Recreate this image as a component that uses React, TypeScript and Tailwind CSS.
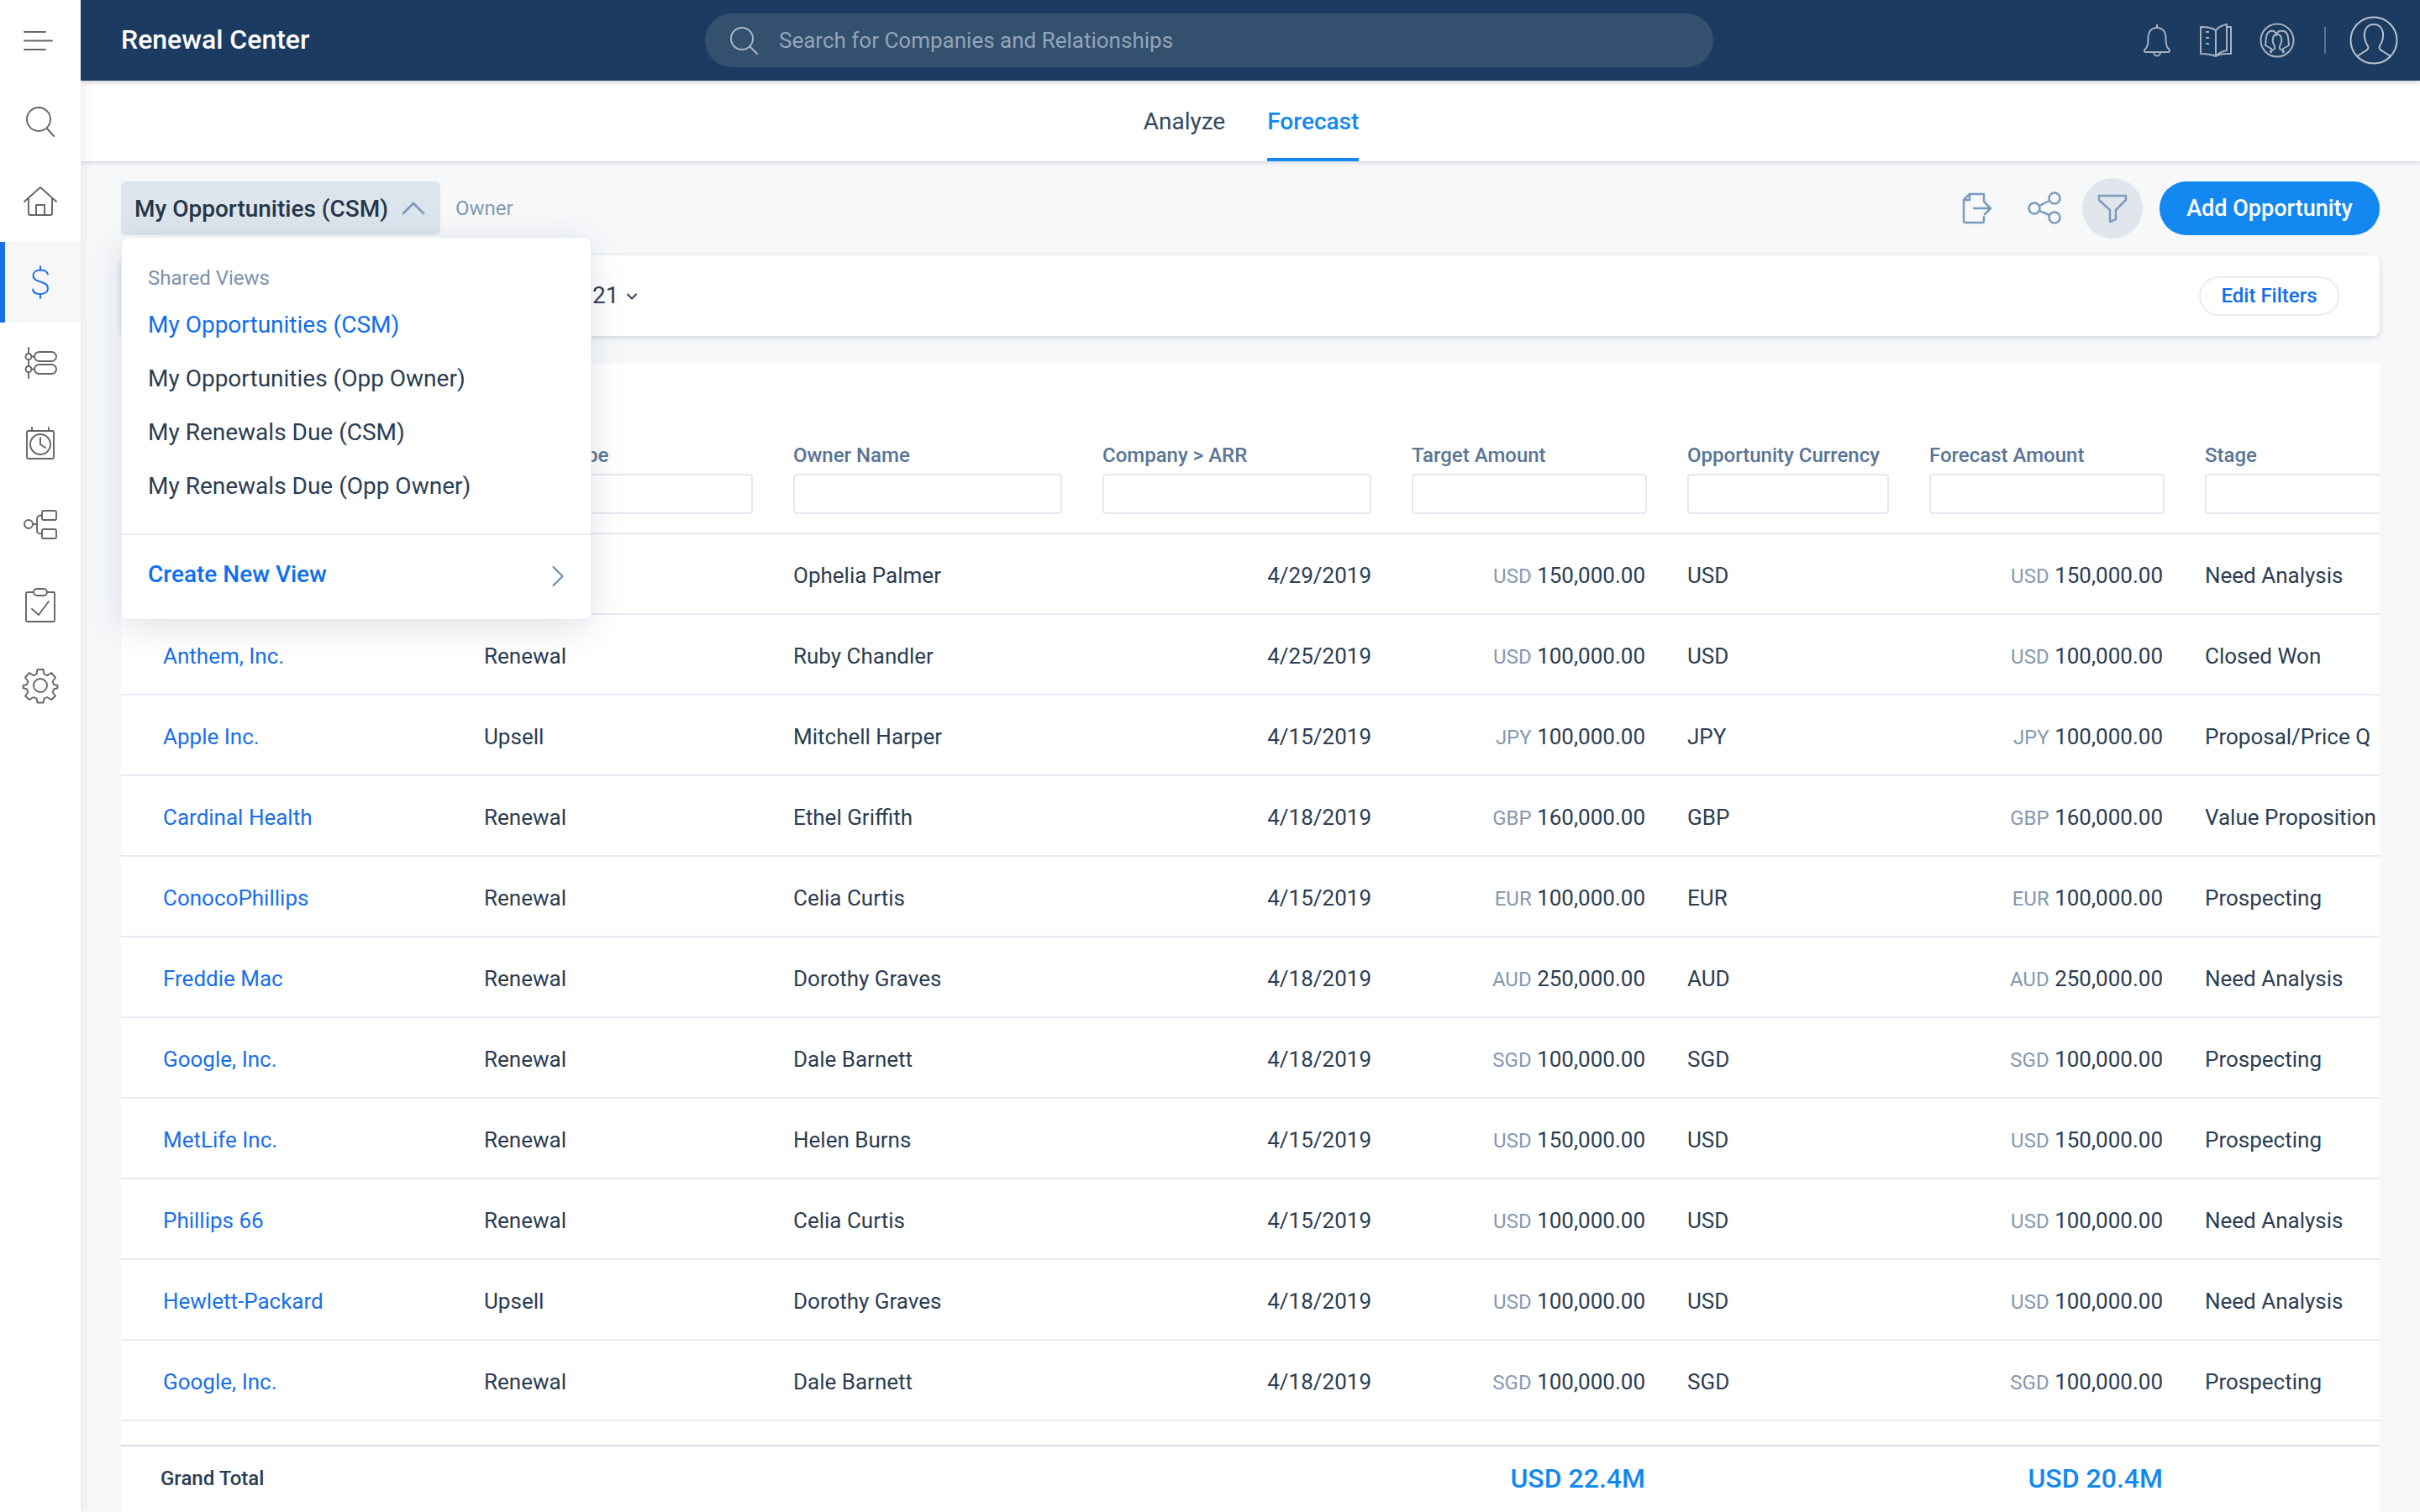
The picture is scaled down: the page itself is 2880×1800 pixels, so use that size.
import { ChevronDown, ChevronRight, ChevronUp } from "lucide-react";

type Row = {
  company: string;
  type: string;
  owner: string;
  date: string;
  cur: string;
  target: string;
  forecast: string;
  stage: string;
};

const rows: Row[] = [
  { company: "", type: "", owner: "Ophelia Palmer", date: "4/29/2019", cur: "USD", target: "150,000.00", forecast: "150,000.00", stage: "Need Analysis" },
  { company: "Anthem, Inc.", type: "Renewal", owner: "Ruby Chandler", date: "4/25/2019", cur: "USD", target: "100,000.00", forecast: "100,000.00", stage: "Closed Won" },
  { company: "Apple Inc.", type: "Upsell", owner: "Mitchell Harper", date: "4/15/2019", cur: "JPY", target: "100,000.00", forecast: "100,000.00", stage: "Proposal/Price Q" },
  { company: "Cardinal Health", type: "Renewal", owner: "Ethel Griffith", date: "4/18/2019", cur: "GBP", target: "160,000.00", forecast: "160,000.00", stage: "Value Proposition" },
  { company: "ConocoPhillips", type: "Renewal", owner: "Celia Curtis", date: "4/15/2019", cur: "EUR", target: "100,000.00", forecast: "100,000.00", stage: "Prospecting" },
  { company: "Freddie Mac", type: "Renewal", owner: "Dorothy Graves", date: "4/18/2019", cur: "AUD", target: "250,000.00", forecast: "250,000.00", stage: "Need Analysis" },
  { company: "Google, Inc.", type: "Renewal", owner: "Dale Barnett", date: "4/18/2019", cur: "SGD", target: "100,000.00", forecast: "100,000.00", stage: "Prospecting" },
  { company: "MetLife Inc.", type: "Renewal", owner: "Helen Burns", date: "4/15/2019", cur: "USD", target: "150,000.00", forecast: "150,000.00", stage: "Prospecting" },
  { company: "Phillips 66", type: "Renewal", owner: "Celia Curtis", date: "4/15/2019", cur: "USD", target: "100,000.00", forecast: "100,000.00", stage: "Need Analysis" },
  { company: "Hewlett-Packard", type: "Upsell", owner: "Dorothy Graves", date: "4/18/2019", cur: "USD", target: "100,000.00", forecast: "100,000.00", stage: "Need Analysis" },
  { company: "Google, Inc.", type: "Renewal", owner: "Dale Barnett", date: "4/18/2019", cur: "SGD", target: "100,000.00", forecast: "100,000.00", stage: "Prospecting" },
];

const columns = ["Company Name", "Renewal Type", "Owner Name", "Company > ARR", "Target Amount", "Opportunity Currency", "Forecast Amount", "Stage"];

const grid = "grid grid-cols-[384px_320px_320px_320px_280px_240px_280px_280px] gap-x-[48px]";

function Icon({ children, size = 44, color = "#666" }: { children: React.ReactNode; size?: number; color?: string }) {
  return (
    <svg width={size} height={size} viewBox="0 0 44 44" fill="none" stroke={color} strokeWidth="1.9" strokeLinecap="round" strokeLinejoin="round">
      {children}
    </svg>
  );
}

function Sidebar() {
  const item = "h-[96px] flex items-center justify-center";
  return (
    <div className="w-[96px] shrink-0 bg-white flex flex-col z-20 shadow-[4px_0_10px_rgba(60,80,110,0.08)]">
      <div className={item}>
        <Icon>
          <path d="M3 12H28M3 22.5H36M3 33H28" />
        </Icon>
      </div>
      <div className={item}>
        <Icon>
          <circle cx="20" cy="20" r="14" />
          <path d="M30 31L38 40" />
        </Icon>
      </div>
      <div className={item}>
        <Icon>
          <path d="M3 22L22 5L41 22M8 18V36.5a1.5 1.5 0 0 0 1.5 1.5H34.5a1.5 1.5 0 0 0 1.5-1.5V18" />
          <path d="M17 38V26H27V38" />
        </Icon>
      </div>
      <div className={`${item} relative bg-[#f7f7f7]`}>
        <div className="absolute left-0 top-0 bottom-0 w-[6px] bg-[#1a6fe8]" />
        <Icon color="#1a6fe8">
          <path d="M31 12.5C30 9 26.5 7.5 22 7.5C17 7.5 13.5 10 13.5 14C13.5 23.5 31 19.5 31 29.5C31 33.5 27 36 22 36C17 36 13.5 34 13 30.5" />
          <path d="M22 3V7.5M22 36V41" />
        </Icon>
      </div>
      <div className={item}>
        <Icon>
          <rect x="15" y="9" width="26" height="11" rx="5.5" />
          <rect x="15" y="24" width="26" height="11" rx="5.5" />
          <circle cx="8" cy="14.5" r="3.5" />
          <circle cx="8" cy="29.5" r="3.5" />
          <path d="M8 4V11M8 18V26M8 33V40M11.5 14.5H15M11.5 29.5H15" />
        </Icon>
      </div>
      <div className={item}>
        <Icon>
          <rect x="6" y="7" width="32" height="33" rx="1.5" />
          <circle cx="22" cy="23" r="12" />
          <path d="M22 15V23L28 27M12 3V7M32 3V7" />
        </Icon>
      </div>
      <div className={item}>
        <Icon>
          <circle cx="8" cy="22" r="5" />
          <rect x="24" y="6" width="17" height="11" rx="2" />
          <rect x="24" y="28" width="17" height="11" rx="2" />
          <path d="M13 22H18M18 15V30C18 32 20 33.5 24 33.5M18 15C18 13 20 11.5 24 11.5" />
        </Icon>
      </div>
      <div className={item}>
        <Icon>
          <rect x="5" y="7" width="34" height="35" rx="1.5" />
          <rect x="14" y="3" width="16" height="8" rx="4" fill="#fff" />
          <path d="M12 27L20 34L32 18" />
        </Icon>
      </div>
      <div className={item}>
        <Icon>
          <circle cx="22" cy="22" r="8" />
          <path d="M18.5 3H25.5L26.5 8.5L30 10.2L35 7L40 12.5L36.6 17.2L38 21L42.5 22L42.5 25L38 26.5L36.6 30L40 34.5L35 39L30 36L26.5 37.6L25.5 42.5H18.5L17.5 37.6L14 36L9 39L4 34.5L7.4 30L6 26.5L1.5 25L1.5 22L6 21L7.4 17.2L4 12.5L9 7L14 10.2L17.5 8.5Z" />
        </Icon>
      </div>
    </div>
  );
}

function Header() {
  return (
    <div className="h-[96px] shrink-0 bg-[#1c3b60] flex items-center pl-[48px] pr-[26px] z-10 shadow-[0_2px_6px_rgba(0,0,0,0.2)]">
      <div className="w-[695px] text-[32px] font-medium text-white pb-[2px]">Renewal Center</div>
      <div className="w-[1200px] h-[64px] rounded-full bg-[#33506f] flex items-center pl-[28px]">
        <svg width="36" height="36" viewBox="0 0 36 36" fill="none" stroke="#a9b6c6" strokeWidth="2" strokeLinecap="round">
          <circle cx="16" cy="16" r="13" />
          <path d="M26 26L34 34" />
        </svg>
        <span className="ml-[24px] text-[26px] text-[#93a4b8]">Search for Companies and Relationships</span>
      </div>
      <div className="ml-auto flex items-center">
        <svg width="36" height="44" viewBox="0 0 36 44" fill="none" stroke="#a6b2c0" strokeWidth="2" strokeLinejoin="round">
          <path d="M18 7C11 7 7.5 12.5 7.5 18C7.5 26 7 30 3.5 33C2.5 34 3 36 4.5 36H31.5C33 36 33.5 34 32.5 33C29 30 28.5 26 28.5 18C28.5 12.5 25 7 18 7Z" />
          <path d="M18 7V3M14 36C14 42 22 42 22 36" />
        </svg>
        <svg className="ml-[32px]" width="40" height="42" viewBox="0 0 40 42" fill="none" stroke="#a6b2c0" strokeWidth="2" strokeLinejoin="round">
          <path d="M20 9C14 5 8 5 2 5V37C8 37 14 37 20 40C25 36 31 37 38 37V5H33" />
          <path d="M20 9V40C24 35 28 34 33 33V2C28 3 23 5 20 9Z" />
          <path d="M8 11H12M8 18H12M8 25H12" />
        </svg>
        <svg className="ml-[32px]" width="42" height="42" viewBox="0 0 42 42" fill="none" stroke="#a6b2c0" strokeWidth="2">
          <circle cx="21" cy="21" r="19.5" />
          <path d="M14 36V31L7 27C8 20 7 12 13 10C17 9 19 11 20 14C21 11 24 9 29 10C35 12 34 20 35 27L28 31V36" />
          <path d="M21 14C26 14 27 19 26 24L24 28V31L30 35M21 14C16 14 15 19 16 24L18 28V31L12 35" />
        </svg>
        <div className="ml-[35px] w-[2px] h-[32px] bg-[#5b7390]" />
        <svg className="ml-[28px]" width="58" height="58" viewBox="0 0 58 58" fill="none" stroke="#b9c3cf" strokeWidth="2">
          <circle cx="29" cy="29" r="27.5" />
          <path d="M9 48L20 41C22 40 23 38 22 36C19 31 17 27 18 20C19 14 23 10 29 10C35 10 39 14 40 20C41 27 39 31 36 36C35 38 36 40 38 41L49 48" />
        </svg>
      </div>
    </div>
  );
}

function Tabs() {
  return (
    <div className="h-[96px] shrink-0 bg-white flex justify-center pl-[2px] gap-[50px] shadow-[0_2px_4px_rgba(60,80,110,0.18)] z-[5]">
      <div className="h-full flex items-center pt-[2px] text-[28px] font-normal text-[#34475c]">Analyze</div>
      <div className="h-full flex items-center text-[28px] font-medium text-[#1388f0] border-b-[4px] border-[#1388f0] pt-[6px]">Forecast</div>
    </div>
  );
}

function Toolbar() {
  return (
    <div className="mt-[24px] h-[64px] flex items-center">
      <div className="w-[380px] h-[64px] rounded-[6px] bg-[#dce4ec] flex items-center pl-[16px] gap-[6px]">
        <span className="text-[28px] font-medium text-[#26374a] whitespace-nowrap pt-[1px]">My Opportunities (CSM)</span>
        <ChevronUp size={48} strokeWidth={1.4} color="#7f9ab8" />
      </div>
      <span className="ml-[18px] text-[24px] text-[#8199b3]">Owner</span>
      <div className="ml-auto flex items-center">
        <svg width="40" height="40" viewBox="0 0 40 40" fill="none" stroke="#7c9bbd" strokeWidth="2.5" strokeLinejoin="round" strokeLinecap="round">
          <path d="M28 12V3H11L4 10V35C4 36.5 5 37 6 37H26C27.5 37 28 36.5 28 35V30" />
          <path d="M11 3V10H4M16 20H36M29 13L36 20L29 27" />
        </svg>
        <svg className="ml-[40px]" width="42" height="40" viewBox="0 0 42 40" fill="none" stroke="#7c9bbd" strokeWidth="2.5">
          <circle cx="8" cy="20" r="6.5" />
          <circle cx="32" cy="8" r="6.5" />
          <circle cx="32" cy="31" r="6.5" />
          <path d="M14 17L26 11M14 23L26 28" />
        </svg>
        <div className="ml-[23px] w-[72px] h-[72px] rounded-full bg-[#e1e6ed] flex items-center justify-center">
          <svg width="36" height="36" viewBox="0 0 36 36" fill="none" stroke="#7c9bbd" strokeWidth="2.5" strokeLinejoin="round">
            <path d="M2 3H34V8L22 20V31L15 34V20L2 8Z" />
          </svg>
        </div>
        <button className="ml-[20px] w-[262px] h-[64px] rounded-full bg-[#1388f0] text-white text-[27px] font-medium">Add Opportunity</button>
      </div>
    </div>
  );
}

function Amount({ cur, value }: { cur: string; value: string }) {
  return (
    <div className="text-right text-[#2b3d51] pr-[2px]">
      <span className="text-[#8599ae] text-[24px]">{cur}</span> {value}
    </div>
  );
}

function Table() {
  return (
    <div className="mt-[32px] flex-1 bg-white overflow-hidden">
      <div className={`${grid} h-[204px] pb-[22px] items-end border-b-[2px] border-[#e6ebf4]`}>
        {columns.map((c, i) => (
          <div key={c} className={i === 0 ? "" : "flex flex-col gap-[6px]"}>
            {i > 0 && (
              <>
                <div className="text-[24px] font-medium text-[#5a7595] whitespace-nowrap leading-[32px]">{c}</div>
                <div className="h-[48px] rounded-[4px] border-[2px] border-[#e3e8f1] bg-white" />
              </>
            )}
          </div>
        ))}
      </div>
      {rows.map((r, i) => (
        <div key={i} className={`${grid} h-[96px] pt-[4px] items-center border-b-[2px] border-[#e6ebf4] text-[26px] text-[#2b3d51]`}>
          <div className="pl-[50px] text-[#1a6fe8]">{r.company}</div>
          <div>{r.type}</div>
          <div>{r.owner}</div>
          <div className="text-right">{r.date}</div>
          <Amount cur={r.cur} value={r.target} />
          <div>{r.cur}</div>
          <Amount cur={r.cur} value={r.forecast} />
          <div className="whitespace-nowrap">{r.stage}</div>
        </div>
      ))}
      <div className={`${grid} mt-[28px] h-[78px] items-center border-t-[2px] border-[#d8dfea]`}>
        <div className="pl-[47px] text-[24px] font-medium text-[#2b3d51]">Grand Total</div>
        <div />
        <div />
        <div />
        <div className="text-right pr-[2px] text-[32px] font-medium text-[#1388f0]">USD 22.4M</div>
        <div />
        <div className="text-right pr-[2px] text-[32px] font-medium text-[#1388f0]">USD 20.4M</div>
        <div />
      </div>
    </div>
  );
}

function Dropdown() {
  return (
    <div className="absolute left-[48px] top-[90px] w-[560px] h-[456px] bg-white rounded-[8px] border border-[#e9edf3] shadow-[0_10px_40px_rgba(60,80,110,0.16)] z-30 flex flex-col">
      <div className="pt-[32px] pl-[31px] flex flex-col">
        <div className="text-[24px] leading-[32px] text-[#7c93ad] mb-[8px]">Shared Views</div>
        <div className="h-[64px] flex items-center text-[28px] text-[#0f6fec]">My Opportunities (CSM)</div>
        <div className="h-[64px] flex items-center text-[28px] text-[#2b3d51]">My Opportunities (Opp Owner)</div>
        <div className="h-[64px] flex items-center text-[28px] text-[#2b3d51]">My Renewals Due (CSM)</div>
        <div className="h-[64px] flex items-center text-[28px] text-[#2b3d51]">My Renewals Due (Opp Owner)</div>
      </div>
      <div className="mt-[24px] border-t-[2px] border-[#e6ebf4] flex-1 flex items-center pl-[31px] pr-[17px] pb-[6px]">
        <span className="text-[28px] font-medium text-[#0f6fec]">Create New View</span>
        <ChevronRight className="ml-auto mt-[4px]" size={44} strokeWidth={1.2} color="#6f8fb3" />
      </div>
    </div>
  );
}

export default function App() {
  return (
    <div className="w-[2880px] h-[1800px] flex overflow-hidden bg-[#f6f8fa] font-['Roboto',sans-serif]">
      <Sidebar />
      <div className="flex-1 flex flex-col min-w-0">
        <Header />
        <Tabs />
        <div className="relative flex-1 flex flex-col pl-[48px] pr-[48px] min-h-0">
          <Toolbar />
          <div className="mt-[24px] h-[96px] bg-white rounded-[8px] shadow-[0_2px_6px_rgba(60,80,110,0.2)] flex items-center pl-[561px] pr-[48px]">
            <span className="text-[28px] text-[#2b3d51]">21</span>
            <ChevronDown className="ml-[6px] mt-[2px]" size={20} strokeWidth={2.5} color="#34475c" />
            <button className="ml-auto w-[167px] h-[47px] rounded-full border-[2px] border-[#e6ebf4] text-[24px] font-medium text-[#0f6fec]">Edit Filters</button>
          </div>
          <Table />
          <Dropdown />
        </div>
      </div>
    </div>
  );
}
